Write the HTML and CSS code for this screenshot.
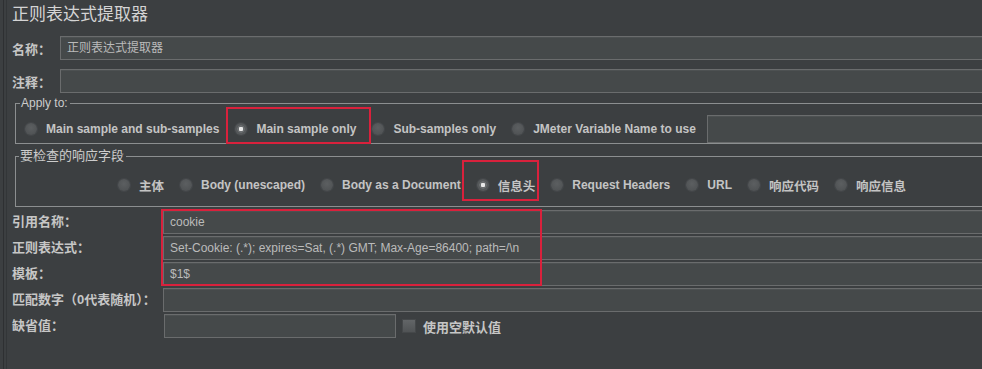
FILE: index.html
```html
<!DOCTYPE html>
<html lang="zh-CN">
<head>
    <meta charset="UTF-8">
    <title>正则表达式提取器</title>
    <link rel="stylesheet" href="styles.css">
</head>
<body>
    <div class="frame">
        <div class="panel">
            <h1>正则表达式提取器</h1>

            <div class="row">
                <label class="label short">名称：</label>
                <div class="field">正则表达式提取器</div>
            </div>
            <div class="row">
                <label class="label short">注释：</label>
                <div class="field"></div>
            </div>

            <fieldset class="group apply">
                <legend>Apply to:</legend>
                <div class="radios">
                    <span class="radio"><i></i>Main sample and sub-samples</span>
                    <span class="radio checked hl hl-main"><i></i>Main sample only</span>
                    <span class="radio"><i></i>Sub-samples only</span>
                    <span class="radio"><i></i>JMeter Variable Name to use</span>
                    <div class="field var"></div>
                </div>
            </fieldset>

            <fieldset class="group check">
                <legend>要检查的响应字段</legend>
                <div class="radios centered">
                    <span class="radio zh"><i></i>主体</span>
                    <span class="radio"><i></i>Body (unescaped)</span>
                    <span class="radio"><i></i>Body as a Document</span>
                    <span class="radio zh checked hl hl-head"><i></i>信息头</span>
                    <span class="radio"><i></i>Request Headers</span>
                    <span class="radio"><i></i>URL</span>
                    <span class="radio zh"><i></i>响应代码</span>
                    <span class="radio zh"><i></i>响应信息</span>
                </div>
            </fieldset>

            <div class="fields">
                <div class="line">
                    <label class="label">引用名称：</label>
                    <div class="field">cookie</div>
                </div>
                <div class="line">
                    <label class="label">正则表达式：</label>
                    <div class="field">Set-Cookie: (.*); expires=Sat, (.*) GMT; Max-Age=86400; path=/\n</div>
                </div>
                <div class="line">
                    <label class="label">模板：</label>
                    <div class="field">$1$</div>
                </div>
                <div class="line">
                    <label class="label">匹配数字（0代表随机）：</label>
                    <div class="field"></div>
                </div>
                <div class="line">
                    <label class="label">缺省值：</label>
                    <div class="field small"></div>
                    <span class="checkbox"></span>
                    <span class="check-text">使用空默认值</span>
                </div>
                <!-- red annotation box around the three filled rows -->
                <div class="mark-box"></div>
            </div>
        </div>
    </div>
</body>
</html>
```

FILE: styles.css
```css
body {
    margin: 0;
    background-color: #3c3f41;
    color: #c8c8c8;
    font-family: "Liberation Sans", "Noto Sans CJK SC", sans-serif;
    font-size: 12px;
    overflow: hidden;
    height: 369px;
}
.frame {
    margin-left: 3px;
    border-left: 1px solid #2e3032;
    height: 369px;
}
.panel {
    margin-left: 2px;
    border-left: 1px solid #333638;
    padding-left: 5px;
    width: 1000px;
    height: 369px;
}
h1 {
    margin: 0;
    padding-top: 3px;
    font-size: 17px;
    line-height: 24px;
    font-weight: normal;
    color: #d4d4d4;
}
.row {
    display: flex;
    align-items: center;
    height: 24px;
    margin-top: 9px;
}
.label {
    flex: none;
    width: 151px;
    font-size: 13px;
    font-weight: bold;
    color: #c6c6c6;
    white-space: nowrap;
}
.label.short {
    width: 48px;
}
.field {
    flex: 1;
    box-sizing: border-box;
    height: 24px;
    line-height: 22px;
    padding-left: 6px;
    background-color: #45494a;
    border: 1px solid #6a6c6d;
    box-shadow: inset 0 1px 0 #4d5152;
    color: #bbbbbb;
    white-space: nowrap;
    overflow: hidden;
}
.group {
    margin: 0 3px;
    border: 1px solid #8c8f90;
    min-width: 0;
}
.group legend {
    padding: 0 2px 0 1px;
    color: #cccccc;
}
.apply {
    margin-top: 4px;
    padding: 6px 0 0 9px;
}
.apply legend {
    margin-left: -5px;
    font-size: 12px;
    line-height: 12px;
}
.check {
    margin-top: 5px;
    padding: 8px 0 7px 0;
}
.check legend {
    margin-left: 3px;
    font-size: 13px;
    line-height: 14px;
}
.radios {
    display: flex;
    height: 28px;
    gap: 16px;
}
.radios.centered {
    justify-content: center;
}
.radio {
    display: flex;
    align-items: center;
    gap: 9px;
    font-weight: bold;
    color: #c4c4c4;
    white-space: nowrap;
}
.radio.zh {
    font-size: 12.5px;
}
.radio i {
    display: block;
    width: 12px;
    height: 12px;
    border-radius: 50%;
    background: radial-gradient(circle at 50% 40%, #5c5f61, #4b4e50);
    box-shadow: 0 0 0 1px #44474a;
}
.radio.checked i {
    background: radial-gradient(circle, #e8e8e8 0 2px, #6a6d6f 2.5px 3.5px, #55585a 4px);
}
.field.var {
    height: 28px;
    margin-left: -5px;
}
.hl {
    position: relative;
}
.hl::after {
    content: "";
    position: absolute;
    border: 2px solid #d9213c;
}
.hl-main::after {
    left: -9px;
    right: -15px;
    top: -8px;
    bottom: -1px;
}
.hl-head::after {
    left: -15px;
    right: -4px;
    top: -11px;
    bottom: -2px;
}
.fields {
    position: relative;
    margin-top: 3px;
    display: flex;
    flex-direction: column;
    gap: 2px;
}
.line {
    display: flex;
    align-items: center;
    height: 24px;
}
.line .label {
    margin-top: -4px;
}
.field.small {
    flex: none;
    width: 232px;
    margin-left: 1px;
}
.checkbox {
    width: 12px;
    height: 12px;
    margin-left: 7px;
    background: linear-gradient(#626567, #505355);
    box-shadow: 0 0 0 1px #45484a;
}
.check-text {
    margin-left: 8px;
    font-size: 13px;
    font-weight: bold;
    color: #c6c6c6;
}
.mark-box {
    position: absolute;
    left: 149px;
    top: -1px;
    width: 381px;
    height: 77px;
    box-sizing: border-box;
    border: 2px solid #d9213c;
}
```
